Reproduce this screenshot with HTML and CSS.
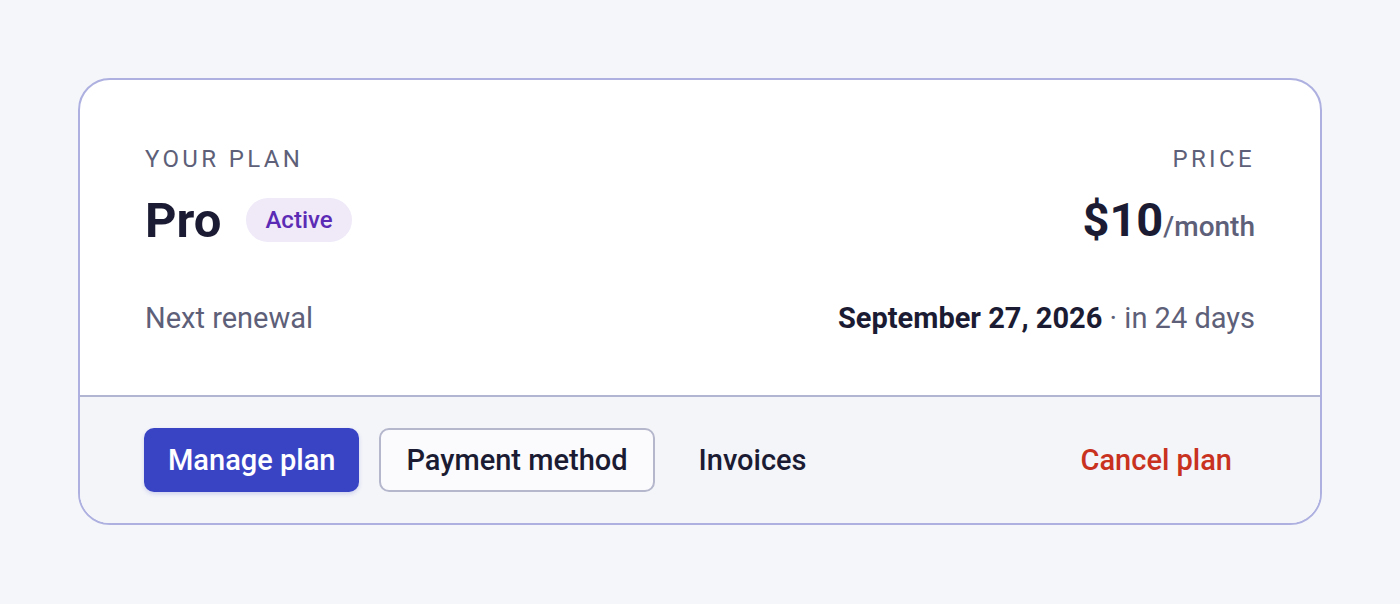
FILE: index.html
```html
<!DOCTYPE html>
<html lang="en">
<head>
    <meta charset="UTF-8">
    <meta name="viewport" content="width=device-width, initial-scale=1.0">
    <title>Your Plan</title>
    <link rel="stylesheet" href="styles.css">
</head>
<body>
    <div class="plan-card">
        <div class="plan-body">
            <div class="plan-head">
                <div class="plan-info">
                    <div class="label">Your plan</div>
                    <div class="plan-name">
                        <span class="name">Pro</span>
                        <span class="badge">Active</span>
                    </div>
                </div>
                <div class="plan-price">
                    <div class="label">Price</div>
                    <div class="price"><span class="amount">$10</span><span class="period">/month</span></div>
                </div>
            </div>
            <div class="renewal">
                <span class="muted">Next renewal</span>
                <span><strong>September 27, 2026</strong><span class="muted"> · in 24 days</span></span>
            </div>
        </div>
        <div class="plan-actions">
            <button class="btn btn-primary">Manage plan</button>
            <button class="btn btn-outline">Payment method</button>
            <button class="btn btn-link">Invoices</button>
            <button class="btn btn-link btn-danger">Cancel plan</button>
        </div>
    </div>
</body>
</html>
```

FILE: styles.css
```css
body {
    margin: 0;
    padding: 78px;
    background: #f5f6fa;
    font-family: Roboto, "Noto Sans", sans-serif;
    color: #1b1c33;
}
.plan-card {
    background: #fff;
    border: 2px solid #aeb1e0;
    border-radius: 32px;
    overflow: hidden;
}
.plan-body {
    padding: 64px 65px 59px;
}
.plan-head {
    display: flex;
    justify-content: space-between;
}
.label {
    font-size: 24px;
    line-height: 30px;
    letter-spacing: 0.14em;
    text-transform: uppercase;
    color: #5d6078;
}
.plan-price {
    text-align: right;
}
.label:last-child {
    margin-right: -0.14em;
}
.plan-name {
    display: flex;
    align-items: center;
    margin-top: 16px;
    height: 60px;
}
.name {
    font-size: 49px;
    font-weight: 700;
}
.badge {
    margin-left: 25px;
    height: 44px;
    line-height: 44px;
    padding: 0 19px;
    border-radius: 22px;
    background: #efe9f8;
    color: #5b2bb5;
    font-size: 24px;
    font-weight: 500;
}
.price {
    margin-top: 16px;
    height: 60px;
    line-height: 60px;
}
.amount {
    font-size: 47px;
    font-weight: 700;
}
.period {
    font-size: 28px;
    font-weight: 500;
    color: #5d6078;
}
.renewal {
    display: flex;
    justify-content: space-between;
    margin-top: 50px;
    font-size: 29px;
    line-height: 36px;
}
.renewal strong {
    font-weight: 700;
}
.muted {
    color: #5d6078;
}
.plan-actions {
    display: flex;
    align-items: center;
    gap: 20px;
    padding: 31px 64px;
    background: #f4f5f9;
    border-top: 2px solid #b2b5d2;
}
.btn {
    height: 64px;
    padding: 0 22px;
    border: 2px solid transparent;
    border-radius: 10px;
    background: none;
    font-family: inherit;
    font-size: 29px;
    font-weight: 500;
    color: #1b1c33;
    cursor: pointer;
}
.btn-primary {
    background: #3944c5;
    color: #fff;
    box-shadow: 0 2px 4px rgba(57, 68, 197, 0.2);
}
.btn-outline {
    padding: 0 25px;
    background: #fbfbfd;
    border-color: #b5b7cc;
}
.btn-danger {
    margin-left: auto;
    color: #c8321f;
}
```
